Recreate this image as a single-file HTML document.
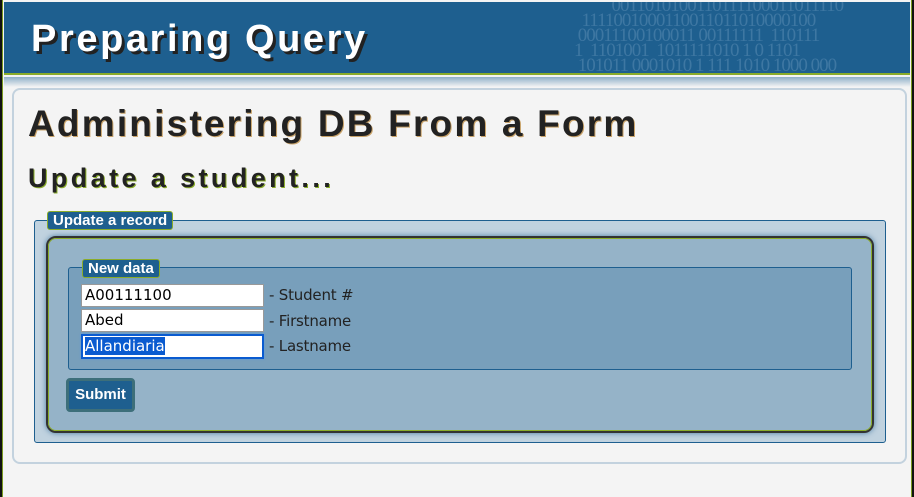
<!DOCTYPE html>
<html><head><style>
*{box-sizing:border-box;margin:0;padding:0}
body{width:914px;height:497px;background:#f4f4f4;position:relative;overflow:hidden;font-family:"Liberation Sans","DejaVu Sans",sans-serif}
.lb{position:absolute;left:0;top:0;width:3px;height:497px;background:#111;border-right:1px solid #7a9a20}
.rb{position:absolute;right:0;top:0;width:3px;height:497px;background:#111;border-left:1px solid #7a9a20}
.hdr{position:absolute;left:4px;top:2px;width:906px;height:73px;background:#1e5f8f;border-bottom:2px solid #8aac2a;overflow:hidden}
.hdr .bin{position:absolute;left:555px;top:-4px;color:#6f9cc0;opacity:.4;font:19px/15px "Liberation Serif",serif;white-space:pre;letter-spacing:-1px}
.hdr h1{position:absolute;left:27px;top:16px;color:#fff;font-size:38px;font-weight:bold;letter-spacing:2.6px;text-shadow:3px 3px 0 #222}
.sh{position:absolute;left:4px;top:77px;width:906px;height:10px;background:linear-gradient(#8fb0c8,#f4f4f4)}
.card{position:absolute;left:12px;top:88px;width:895px;height:376px;border:2px solid #c3d2de;border-radius:8px;background:#f4f4f4}
.t1{position:absolute;left:28px;top:103px;font-size:37px;font-weight:bold;color:#222;letter-spacing:2.2px;text-shadow:1px 1px 0 #c9a36a}
.t2{position:absolute;left:28px;top:163px;font-size:27px;font-weight:bold;color:#222;letter-spacing:3.4px;text-shadow:1px 1px 0 #8aac2a}
.fs1{position:absolute;left:34px;top:220px;width:852px;height:223px;background:#c0d2df;border:1px solid #1e5f8f;border-radius:3px}
.lg{position:absolute;background:#1e5f8f;color:#fff;font-weight:bold;font-size:15px;border:1px solid #8aac2a;border-radius:3px;padding:0 5px;line-height:17px;font-family:"Liberation Sans",sans-serif}
.in{position:absolute;left:46px;top:236px;width:828px;height:197px;background:#95b3c8;border:2px solid #333;outline:1px solid #8aac2a;outline-offset:-3px;border-radius:10px;box-shadow:0 0 6px #4a7ca4}
.fs2{position:absolute;left:68px;top:267px;width:784px;height:103px;background:#789fbb;border:1px solid #1e5f8f;border-radius:3px}
.ip{position:absolute;left:81px;width:183px;height:23px;background:#fff;border:1px solid #999;font:15px/21px "DejaVu Sans",sans-serif;padding-left:3px;color:#000}
.lab{position:absolute;left:269px;font:15px/21px "DejaVu Sans",sans-serif;color:#222;letter-spacing:-.2px}
.sel{background:#0a5bd0;color:#fff}
.btn{position:absolute;left:66px;top:378px;width:69px;height:34px;background:#1e5f8f;border:3px solid #3d6f7a;border-radius:4px;color:#fff;font:bold 15px/28px "Liberation Sans",sans-serif;text-align:center}
</style></head><body>
<div class="hdr"><div class="bin">              0011010100110111100011011110
      1111001000110011011010000100
     00011100100011 00111111  110111
    1  1101001  1011111010 1 0 1101
     101011 0001010 1 111 1010 1000 000
        01  0110001100000 1001 001 010</div><h1>Preparing Query</h1></div>
<div class="sh"></div>
<div class="lb"></div><div class="rb"></div>
<div class="card"></div>
<div class="t1">Administering DB From a Form</div>
<div class="t2">Update a student...</div>
<div class="fs1"></div>
<div class="lg" style="left:47px;top:211px">Update a record</div>
<div class="in"></div>
<div class="fs2"></div>
<div class="lg" style="left:82px;top:259px">New data</div>
<div class="ip" style="top:284px">A00111100</div>
<div class="lab" style="top:285px">- Student #</div>
<div class="ip" style="top:309px">Abed</div>
<div class="lab" style="top:311px">- Firstname</div>
<div class="ip" style="top:334px;height:25px;border:2px solid #0a5bd0;box-shadow:0 0 2px #5a9ae0;line-height:21px;padding-left:2px"><span class="sel">Allandiaria</span></div>
<div class="lab" style="top:336px">- Lastname</div>
<div class="btn">Submit</div>
</body></html>
